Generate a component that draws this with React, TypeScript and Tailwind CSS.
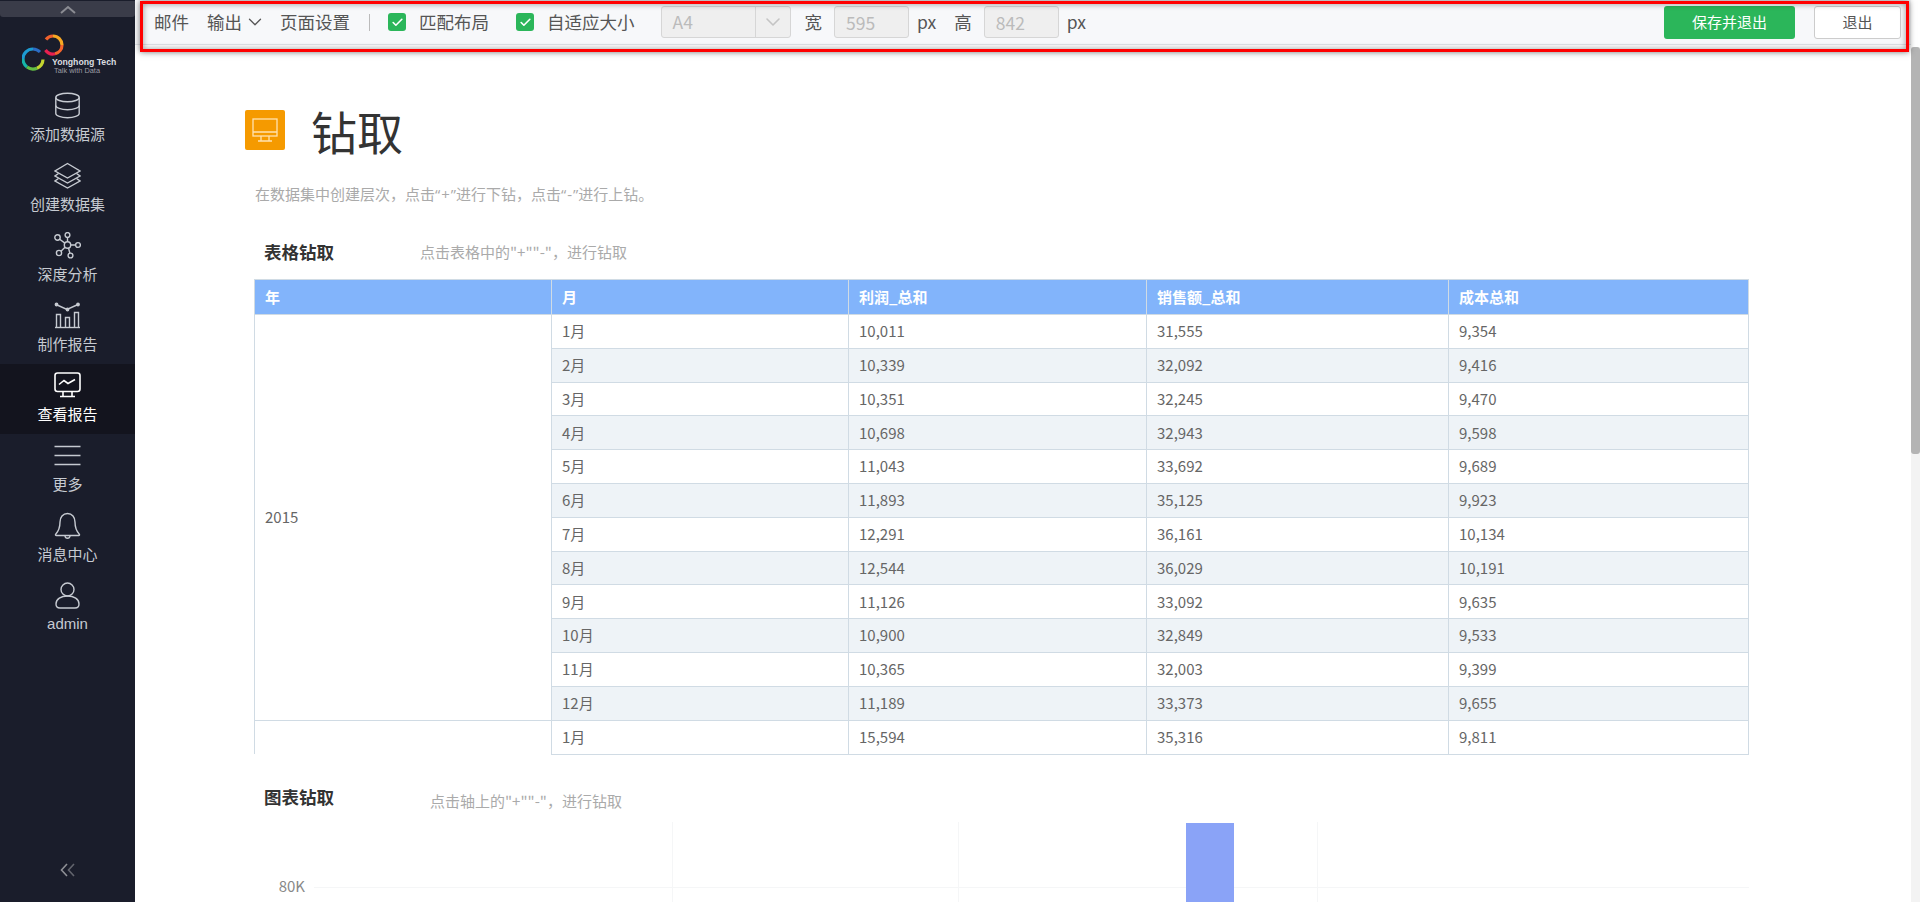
import { Check, ChevronDown } from 'lucide-react';

const rows = [
  ['1月', '10,011', '31,555', '9,354'],
  ['2月', '10,339', '32,092', '9,416'],
  ['3月', '10,351', '32,245', '9,470'],
  ['4月', '10,698', '32,943', '9,598'],
  ['5月', '11,043', '33,692', '9,689'],
  ['6月', '11,893', '35,125', '9,923'],
  ['7月', '12,291', '36,161', '10,134'],
  ['8月', '12,544', '36,029', '10,191'],
  ['9月', '11,126', '33,092', '9,635'],
  ['10月', '10,900', '32,849', '9,533'],
  ['11月', '10,365', '32,003', '9,399'],
  ['12月', '11,189', '33,373', '9,655'],
];

function NavIcon({ name }: { name: string }) {
  const common = { width: 27, height: 27, viewBox: '0 0 27 27', fill: 'none', stroke: 'currentColor', strokeWidth: 1.4 };
  if (name === 'db') {
    return (
      <svg {...common}>
        <ellipse cx="13.5" cy="5.5" rx="11.7" ry="4.2" />
        <path d="M1.8 5.5v16c0 2.3 5.2 4.2 11.7 4.2s11.7-1.9 11.7-4.2v-16" />
        <path d="M1.8 13.5c0 2.3 5.2 4.2 11.7 4.2s11.7-1.9 11.7-4.2" />
      </svg>
    );
  }
  if (name === 'layers') {
    return (
      <svg {...common}>
        <path d="M13.5 1.5 26 9l-12.5 7L1 9z" />
        <path d="M4.5 11.5 1 14l12.5 7L26 14l-3.5-2.5" />
        <path d="M4.5 16.5 1 19l12.5 7L26 19l-3.5-2.5" />
      </svg>
    );
  }
  if (name === 'hub') {
    return (
      <svg {...common}>
        <circle cx="13.5" cy="13" r="3.2" />
        <circle cx="3.5" cy="5.5" r="2.7" />
        <circle cx="13.5" cy="3" r="2.4" />
        <circle cx="24" cy="13" r="2.4" />
        <circle cx="16.5" cy="23.5" r="2.4" />
        <circle cx="5" cy="21" r="2.6" />
        <path d="M5.7 7.2l5.2 3.9M13.5 5.4v4.4M16.7 13H21.6M14.5 16l1.4 5.2M11 15.2 7 19.2" />
      </svg>
    );
  }
  if (name === 'report') {
    return (
      <svg {...common}>
        <path d="M2 2.5l11 5 11-5" />
        <circle cx="2.5" cy="2.5" r="1.2" fill="currentColor" />
        <circle cx="13.5" cy="7.5" r="1.2" fill="currentColor" />
        <circle cx="24" cy="2.5" r="1.2" fill="currentColor" />
        <path d="M1 25.5h25" />
        <path d="M2.5 25.5v-13h4v13M11.5 25.5v-10h4v10M20.5 25.5v-15h4v15" />
      </svg>
    );
  }
  if (name === 'view') {
    return (
      <svg {...common} strokeWidth={1.6}>
        <rect x="1" y="1" width="25" height="18.5" rx="2.5" />
        <path d="M5 12.5 10 8.5l4 3 7-4" />
        <path d="M9 19.5v5M18 19.5v5M6 24.5h15" />
      </svg>
    );
  }
  if (name === 'menu') {
    return (
      <svg {...common} strokeWidth={1.6}>
        <path d="M0.5 4.5h26M0.5 13.5h26M0.5 22.5h26" />
      </svg>
    );
  }
  if (name === 'bell') {
    return (
      <svg {...common}>
        <path d="M13.5 1.5c-4.7 0-7.5 4-7.5 8.5 0 6-1.8 9.5-4.3 12.2-.5.6-.1 1.3.6 1.3h22.4c.7 0 1.100-.7.6-1.300C22.800 19.500 21 16 21 10c0-4.500-2.800-8.500-7.500-8.500z" />
        <path d="M11 24c.2 1.500 1.200 2.300 2.500 2.300s2.300-.8 2.500-2.300" />
      </svg>
    );
  }
  return (
    <svg {...common}>
      <circle cx="13.5" cy="7.5" r="6.5" />
      <path d="M2 22c0-5 5-8 11.500-8S25 17 25 22c0 2.500-1.500 4-4 4H6c-2.500 0-4-1.500-4-4z" />
    </svg>
  );
}

function NavItem({ icon, label, active, latin }: { icon: string; label: string; active?: boolean; latin?: boolean }) {
  return (
    <div className={`h-[70px] flex flex-col items-center pt-2 ${active ? 'bg-[#13141e] text-white' : 'text-[#c6cad1]'}`}>
      <NavIcon name={icon} />
      <span className={`text-[15px] leading-5 mt-[5px] ${latin ? "font-['Liberation_Sans',sans-serif]" : ''}`}>{label}</span>
    </div>
  );
}

function Logo() {
  return (
    <svg width="100" height="50" viewBox="0 0 100 50" className="ml-[22px] mt-[15px]">
      <g fill="none" strokeWidth="3.2">
        <path d="M18 20A10 10 0 0 0 11 17" stroke="#2b6cc4" />
        <path d="M11 17A10 10 0 0 0 1 27" stroke="#1d9bd1" />
        <path d="M1 27A10 10 0 0 0 5 35" stroke="#16b5a8" />
        <path d="M5 35A10 10 0 0 0 15 36.200" stroke="#63bf45" />
        <path d="M15 36.200A10 10 0 0 0 21 27.500" stroke="#c3d52f" />
        <path d="M24 7.400A9 9 0 0 1 31 4" stroke="#f0612c" />
        <path d="M31 4A9 9 0 0 1 40 13" stroke="#f7a823" />
        <path d="M40 13A9 9 0 0 1 33 21.800" stroke="#f5642c" />
        <path d="M33 21.800A9 9 0 0 1 23.500 18" stroke="#e8204f" />
      </g>
      <text x="30" y="33" fontFamily="Liberation Sans, sans-serif" fontSize="8.700" fontWeight="700" fill="#dcdde0">Yonghong Tech</text>
      <text x="32" y="41" fontFamily="Liberation Sans, sans-serif" fontSize="7.400" fill="#9a9ca3">Talk with Data</text>
    </svg>
  );
}

function Sidebar() {
  return (
    <aside className="w-[135px] shrink-0 bg-[#1a1d2b] flex flex-col">
      <div className="h-4 mt-px bg-[#3a3c49] rounded-b-[3px] flex justify-center">
        <svg width="16" height="9" viewBox="0 0 16 9" className="mt-[4px]" fill="none" stroke="#8b8c93" strokeWidth="2">
          <path d="M1 8l7-6 7 6" />
        </svg>
      </div>
      <div className="h-[67px]">
        <Logo />
      </div>
      <NavItem icon="db" label="添加数据源" />
      <NavItem icon="layers" label="创建数据集" />
      <NavItem icon="hub" label="深度分析" />
      <NavItem icon="report" label="制作报告" />
      <NavItem icon="view" label="查看报告" active />
      <NavItem icon="menu" label="更多" />
      <NavItem icon="bell" label="消息中心" />
      <NavItem icon="user" label="admin" latin />
      <div className="mt-auto mb-[25px] flex justify-center">
        <svg width="15" height="14" viewBox="0 0 15 14" fill="none" strokeWidth="1.600">
          <path d="M7 1 1.500 7 7 13" stroke="#8f9096" />
          <path d="M14 1 8.500 7 14 13" stroke="#62646d" />
        </svg>
      </div>
    </aside>
  );
}

function CheckItem({ label, className }: { label: string; className: string }) {
  return (
    <div className={`flex items-center ${className}`}>
      <span className="w-[18px] h-[18px] rounded-[3px] bg-[#2bb65a] flex items-center justify-center text-white">
        <Check size={13} strokeWidth={3} />
      </span>
      <span className="ml-[13px]">{label}</span>
    </div>
  );
}

function Toolbar() {
  return (
    <div className="h-[45px] shrink-0 bg-[#f7f8fa] border-b border-[#e0e3e8] flex items-center pl-[19px] text-[17.5px] text-[#555]">
      <span>邮件</span>
      <span className="ml-[18px]">输出</span>
      <ChevronDown size={22} strokeWidth={1.4} className="ml-[2px]" />
      <span className="ml-[14px]">页面设置</span>
      <span className="ml-[19px] w-px h-[17px] bg-[#bbb]" />
      <CheckItem label="匹配布局" className="ml-[18px]" />
      <CheckItem label="自适应大小" className="ml-[27px]" />
      <div className="ml-[26px] w-[130px] h-8 border border-[#d6d6d6] rounded-[3px] bg-[#efefef] flex items-center text-[#bbb]">
        <span className="flex-1 pl-[11px]">A4</span>
        <span className="w-[35px] h-full border-l border-[#d6d6d6] flex items-center justify-center text-[#c4c4c4]">
          <ChevronDown size={24} strokeWidth={1.6} />
        </span>
      </div>
      <span className="ml-[14px]">宽</span>
      <input disabled defaultValue="595" className="ml-[12px] w-[75px] h-8 border border-[#d6d6d6] rounded-[3px] bg-[#efefef] pl-[11px] text-[#bbb]" />
      <span className="ml-[8px]">px</span>
      <span className="ml-[18px]">高</span>
      <input disabled defaultValue="842" className="ml-[12px] w-[75px] h-8 border border-[#d6d6d6] rounded-[3px] bg-[#efefef] pl-[11px] text-[#bbb]" />
      <span className="ml-[8px]">px</span>
      <button className="ml-auto w-[131px] h-[33px] rounded-[3px] bg-[#2bb65a] text-white text-[15px]">保存并退出</button>
      <button className="ml-[19px] mr-[10px] w-[87px] h-[33px] rounded-[3px] border border-[#ccc] bg-white text-[15px] text-[#555]">退出</button>
    </div>
  );
}

function DrillTable() {
  const th = 'border border-[#d0dbe4] border-t-[#d0dbe4] bg-[#82b4fb] text-white font-bold text-left pl-[10px] text-[15px]';
  const td = 'border border-[#d0dbe4] pl-[10px] text-[15px] text-[#666] font-normal';
  return (
    <table className="ml-[119px] w-[1494px] table-fixed border-collapse">
      <colgroup>
        <col className="w-[297px]" />
        <col className="w-[297px]" />
        <col className="w-[298px]" />
        <col className="w-[302px]" />
        <col className="w-[300px]" />
      </colgroup>
      <thead>
        <tr className="h-[35px]">
          <th className={th}>年</th>
          <th className={th}>月</th>
          <th className={th}>利润_总和</th>
          <th className={th}>销售额_总和</th>
          <th className={th}>成本总和</th>
        </tr>
      </thead>
      <tbody>
        {rows.map((row, i) => (
          <tr key={row[0]} className={`h-[33.8px] ${i % 2 === 1 ? 'bg-[#eef3f7]' : 'bg-white'}`}>
            {i === 0 && <td rowSpan={12} className={`${td} bg-white`}>2015</td>}
            {row.map(cell => <td key={cell} className={td}>{cell}</td>)}
          </tr>
        ))}
        <tr className="h-[34px] bg-white">
          <td className={`${td} border-b-0`}></td>
          <td className={td}>1月</td>
          <td className={td}>15,594</td>
          <td className={td}>35,316</td>
          <td className={td}>9,811</td>
        </tr>
      </tbody>
    </table>
  );
}

function DrillChart() {
  return (
    <svg width="1495" height="81" viewBox="0 0 1495 81" className="ml-[119px] block shrink-0">
      <path d="M418.500 0v81M704.500 0v81M1063.500 0v81" stroke="#f5f6f7" />
      <path d="M60 65.500h1435" stroke="#f5f6f7" />
      <rect x="932" y="1" width="48" height="80" fill="#8aa3f7" />
      <text x="51" y="69.500" textAnchor="end" fontSize="15" fill="#888">80K</text>
    </svg>
  );
}

export default function App() {
  return (
    <div className="relative w-[1920px] h-[902px] overflow-hidden flex bg-white font-['Noto_Sans_CJK_SC',sans-serif]">
      <Sidebar />
      <div className="flex-1 min-w-0 flex flex-col overflow-hidden">
        <Toolbar />
        <div className="flex items-center ml-[110px] mt-[65px] h-10 shrink-0">
          <span className="w-10 h-10 rounded-[2px] bg-[#f59a00] flex items-center justify-center">
            <svg width="26" height="26" viewBox="0 0 26 26" fill="none" stroke="#ffe2b0" strokeWidth="1.300">
              <rect x="1" y="2" width="24" height="17" />
              <path d="M1 15h24M9 19v5M17 19v5M6 24h14" />
            </svg>
          </span>
          <h1 className="ml-[26px] text-[46px] leading-none text-[#333] font-normal">钻取</h1>
        </div>
        <p className="ml-[120px] mt-[34px] text-[15px] leading-5 text-[#aaa] font-['Open_Sans','Noto_Sans_CJK_SC',sans-serif]">
          在数据集中创建层次，点击“<span className="px-px">+</span>”进行下钻，点击“<span className="px-px">-</span>”进行上钻。
        </p>
        <div className="flex items-center ml-[129px] mt-[36px] h-[24px] shrink-0">
          <h2 className="w-[156px] text-[17.5px] font-bold text-[#333]">表格钻取</h2>
          <span className="text-[15px] text-[#aaa]">点击表格中的"+""-"，进行钻取</span>
        </div>
        <div className="mt-[15px] shrink-0">
          <DrillTable />
        </div>
        <div className="flex ml-[129px] mt-[30px] h-[37px] shrink-0">
          <h2 className="w-[166px] text-[17.5px] leading-6 font-bold text-[#333]">图表钻取</h2>
          <span className="text-[15px] leading-5 mt-[6px] text-[#aaa]">点击轴上的"+""-"，进行钻取</span>
        </div>
        <DrillChart />
      </div>
      <div className="w-[9px] shrink-0 bg-[#f3f3f3] mt-[47px]">
        <div className="h-[407px] bg-[#b4b4b4] rounded-[3px]" />
      </div>
      {/* red annotation box over the toolbar */}
      <div className="absolute left-[140px] top-px w-[1769px] h-[51px] border-[3.5px] border-[#f00] pointer-events-none shadow-[0_0_6px_rgba(0,0,0,0.55),inset_0_0_6px_rgba(0,0,0,0.4)]" />
    </div>
  );
}
